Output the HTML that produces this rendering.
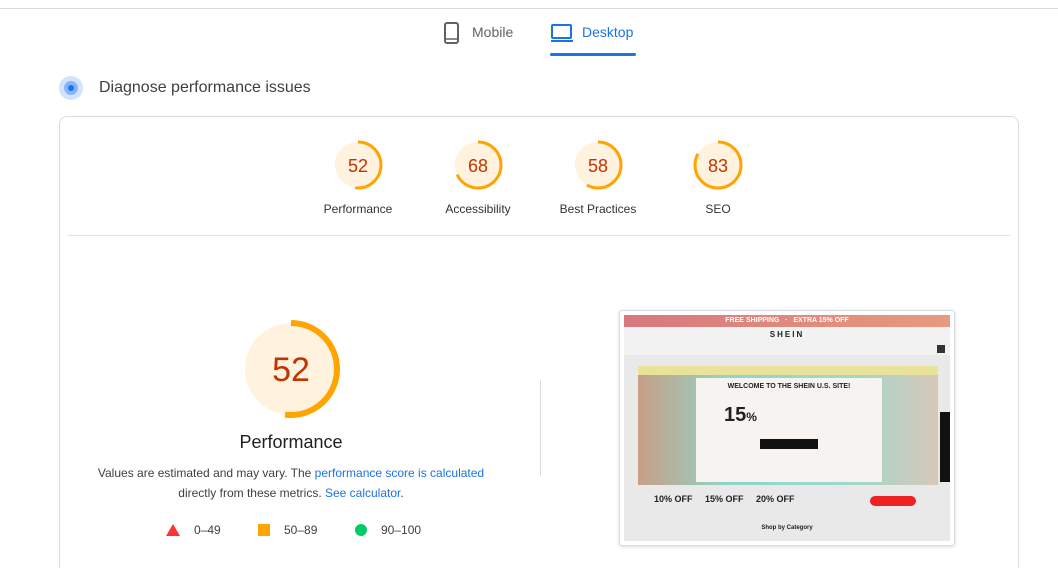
<!DOCTYPE html>
<html><head><meta charset="utf-8"><style>
html,body{margin:0;width:1058px;height:568px;overflow:hidden;background:#fff;font-family:"Liberation Sans",Arial,sans-serif;position:relative;color:#202124}
.a{position:absolute}
.g text{font-family:"Liberation Sans",Arial,sans-serif}
.lbl{position:absolute;width:120px;text-align:center;font-size:12px;color:#333;top:202px}
</style></head><body>
<div class="a" style="left:0;top:8px;width:1058px;height:1px;background:#dadce0"></div>
<svg class="a" style="left:443px;top:22px" width="18" height="22"><rect x="2" y="1" width="13" height="20" rx="2" fill="none" stroke="#5f6368" stroke-width="2"/><line x1="2" y1="17" x2="15" y2="17" stroke="#5f6368" stroke-width="1.5"/></svg>
<div class="a" style="left:472px;top:24px;font-size:14px;color:#5f6368">Mobile</div>
<svg class="a" style="left:550px;top:23px" width="24" height="20"><rect x="2" y="2" width="19" height="13" rx="1" fill="none" stroke="#1a73e8" stroke-width="2"/><line x1="1" y1="18" x2="23" y2="18" stroke="#1a73e8" stroke-width="2"/></svg>
<div class="a" style="left:582px;top:24px;font-size:14px;color:#1a73e8">Desktop</div>
<div class="a" style="left:550px;top:53px;width:86px;height:3px;background:#1a73e8;border-radius:2px"></div>
<div class="a" style="left:59px;top:76px;width:24px;height:24px;border-radius:50%;background:#d2e3fc"></div>
<div class="a" style="left:64px;top:81px;width:14px;height:14px;border-radius:50%;background:#8ab4f8"></div>
<div class="a" style="left:68px;top:85px;width:6px;height:6px;border-radius:50%;background:#1a73e8"></div>
<div class="a" style="left:99px;top:79px;font-size:16px;color:#3c4043">Diagnose performance issues</div>
<div class="a" style="left:59px;top:116px;width:958px;height:470px;border:1px solid #dadce0;border-radius:8px"></div>
<svg class="a g" style="left:0;top:0" width="1058" height="568">
<g transform="translate(358,165)"><circle r="23" fill="#fff3e0"/><circle r="23" fill="none" stroke="#ffa400" stroke-width="3" stroke-dasharray="75.1 200" transform="rotate(-90)"/><text y="7" text-anchor="middle" font-size="18" fill="#c33300">52</text></g>
<g transform="translate(478,165)"><circle r="23" fill="#fff3e0"/><circle r="23" fill="none" stroke="#ffa400" stroke-width="3" stroke-dasharray="98.3 200" transform="rotate(-90)"/><text y="7" text-anchor="middle" font-size="18" fill="#c33300">68</text></g>
<g transform="translate(598,165)"><circle r="23" fill="#fff3e0"/><circle r="23" fill="none" stroke="#ffa400" stroke-width="3" stroke-dasharray="83.8 200" transform="rotate(-90)"/><text y="7" text-anchor="middle" font-size="18" fill="#c33300">58</text></g>
<g transform="translate(718,165)"><circle r="23" fill="#fff3e0"/><circle r="23" fill="none" stroke="#ffa400" stroke-width="3" stroke-dasharray="120 200" transform="rotate(-90)"/><text y="7" text-anchor="middle" font-size="18" fill="#c33300">83</text></g>
<g transform="translate(291,369)"><circle r="46" fill="#fff3e0"/><circle r="46" fill="none" stroke="#ffa400" stroke-width="6" stroke-dasharray="150.3 400" transform="rotate(-90)"/><text y="12" text-anchor="middle" font-size="34" fill="#c33300">52</text></g>
</svg>
<div class="lbl" style="left:298px">Performance</div>
<div class="lbl" style="left:418px">Accessibility</div>
<div class="lbl" style="left:538px">Best Practices</div>
<div class="lbl" style="left:658px">SEO</div>
<div class="a" style="left:68px;top:235px;width:942px;height:1px;background:#e0e0e0"></div>
<div class="a" style="left:191px;top:432px;width:200px;text-align:center;font-size:18px;color:#202124">Performance</div>
<div class="a" style="left:80px;top:463px;width:422px;text-align:center;font-size:12px;line-height:20px;color:#3c4043">Values are estimated and may vary. The <span style="color:#1a73e8">performance score is calculated</span><br>directly from these metrics. <span style="color:#1a73e8">See calculator</span>.</div>
<svg class="a" style="left:166px;top:524px" width="14" height="12"><polygon points="7,0 14,12 0,12" fill="#f33"/></svg>
<div class="a" style="left:194px;top:523px;font-size:12px;color:#3c4043">0–49</div>
<div class="a" style="left:258px;top:524px;width:12px;height:12px;background:#ffa400"></div>
<div class="a" style="left:284px;top:523px;font-size:12px;color:#3c4043">50–89</div>
<div class="a" style="left:355px;top:524px;width:12px;height:12px;border-radius:50%;background:#0c6"></div>
<div class="a" style="left:381px;top:523px;font-size:12px;color:#3c4043">90–100</div>
<div class="a" style="left:540px;top:380px;width:1px;height:96px;background:#dadce0"></div>
<div class="a" style="left:619px;top:310px;width:334px;height:234px;border:1px solid #dadce0;border-radius:3px;box-shadow:0 1px 3px rgba(0,0,0,.15)"></div>
<div class="a" style="left:624px;top:315px;width:326px;height:226px;background:#e9e9e9;overflow:hidden">
 <div class="a" style="left:0;top:0;width:326px;height:12px;background:linear-gradient(90deg,#d9777e,#e79a7f);color:#fff;font-size:7px;font-weight:bold;text-align:center;line-height:12px">FREE SHIPPING &nbsp; · &nbsp; EXTRA 15% OFF</div>
 <div class="a" style="left:0;top:12px;width:326px;height:28px;background:#f2f2f2;font-size:8px;font-weight:bold;text-align:center;line-height:16px;letter-spacing:2px">SHEIN</div>
 <div class="a" style="left:313px;top:30px;width:8px;height:8px;background:#333"></div>
 <div class="a" style="left:14px;top:51px;width:300px;height:9px;background:#e8e29a"></div>
 <div class="a" style="left:14px;top:60px;width:300px;height:110px;background:linear-gradient(90deg,#c89f86,#8fd6c8 30%,#9ed8cc 70%,#d8c8b8)"></div>
 <div class="a" style="left:72px;top:63px;width:186px;height:104px;background:#f7f3f0;text-align:center;font-size:7px;font-weight:bold;padding-top:5px;box-sizing:border-box">WELCOME TO THE SHEIN U.S. SITE!<div style="font-size:20px;margin-top:14px;text-align:left;padding-left:28px">15<span style="font-size:12px">%</span></div><div style="margin:12px auto 0;width:58px;height:10px;background:#111"></div></div>
 <div class="a" style="left:316px;top:97px;width:10px;height:70px;background:#111"></div>
 <div class="a" style="left:30px;top:179px;font-size:9px;font-weight:bold">10% OFF &nbsp;&nbsp;&nbsp; 15% OFF &nbsp;&nbsp;&nbsp; 20% OFF</div>
 <div class="a" style="left:246px;top:181px;width:46px;height:10px;border-radius:5px;background:#e22"></div>
 <div class="a" style="left:0;top:210px;width:326px;text-align:center;font-size:6px;font-weight:bold">Shop by Category</div>
</div>
</body></html>
